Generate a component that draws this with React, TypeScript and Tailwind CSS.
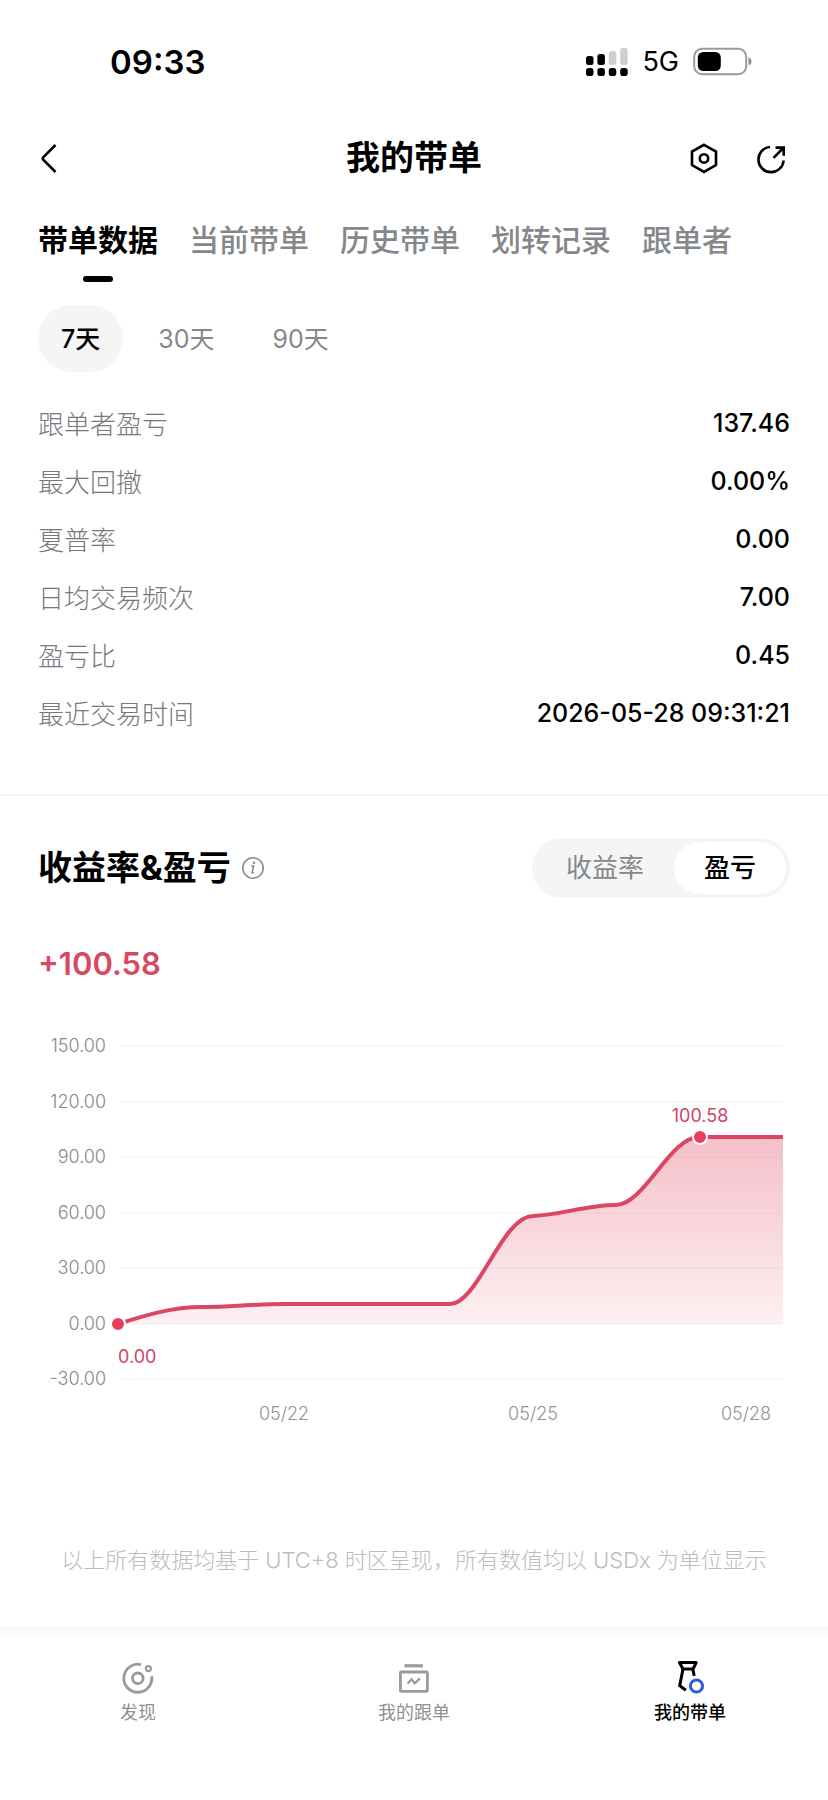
import React, { useState } from 'react';

const tabs = ['带单数据', '当前带单', '历史带单', '划转记录', '跟单者'];
const ranges = ['7天', '30天', '90天'];

const stats = [
  { label: '跟单者盈亏', value: '137.46' },
  { label: '最大回撤', value: '0.00%' },
  { label: '夏普率', value: '0.00' },
  { label: '日均交易频次', value: '7.00' },
  { label: '盈亏比', value: '0.45' },
  { label: '最近交易时间', value: '2026-05-28 09:31:21' },
];

const yTicks = [
  { label: '150.00', y: 30 },
  { label: '120.00', y: 86 },
  { label: '90.00', y: 141 },
  { label: '60.00', y: 197 },
  { label: '30.00', y: 252 },
  { label: '0.00', y: 308 },
  { label: '-30.00', y: 363 },
];

const xTicks = [
  { label: '05/22', x: 246 },
  { label: '05/25', x: 495 },
  { label: '05/28', x: 708 },
];

const linePath =
  'M80 308 C108 299 135 291 163 291 C191 291 218 288 246 288 L412 288 C440 288 464 200 495 200 C523 199 548 189 578 189 C606 189 632 121 661 121 L745 121';

function StatusBar() {
  return (
    <div className="flex h-[124px] items-center justify-between pl-[110px] pr-[76px]">
      <span className="text-[33px] leading-10 font-semibold">09:33</span>
      <div className="flex items-center gap-3.5">
        <svg className="h-[30px] w-[42px]" viewBox="0 0 42 30">
          <rect x="0" y="9" width="7.5" height="9" rx="2.5" />
          <rect x="11.4" y="7" width="7.5" height="11" rx="2.5" />
          <rect x="22.8" y="4" width="7.5" height="14" rx="2.5" fill="#cfcfcf" />
          <rect x="34.2" y="1" width="7.5" height="17" rx="2.5" fill="#cfcfcf" />
          <rect x="0" y="21" width="7.5" height="8" rx="2.8" />
          <rect x="11.4" y="21" width="7.5" height="8" rx="2.8" />
          <rect x="22.8" y="21" width="7.5" height="8" rx="2.8" />
          <rect x="34.2" y="21" width="7.5" height="8" rx="2.8" />
        </svg>
        <span className="text-[27px] leading-8">5G</span>
        <svg className="h-[30px] w-[59px]" viewBox="0 0 59 30">
          <rect x="1.2" y="1.7" width="52" height="25.5" rx="8" fill="none" stroke="#9b9b9b" strokeWidth="2" />
          <rect x="4.8" y="5" width="23" height="19" rx="5.5" />
          <path d="M55.5 10.5c2 .6 3 2.2 3 4s-1 3.4-3 4z" fill="#8a8a8a" />
        </svg>
      </div>
    </div>
  );
}

function Header() {
  return (
    <header className="grid h-[68px] grid-cols-3 items-center px-10">
      <button aria-label="返回" className="justify-self-start">
        <svg className="h-8 w-5" viewBox="0 0 20 32" fill="none" stroke="currentColor" strokeWidth="2.6">
          <path d="M15.5 3 3.2 15.3a1.6 1.6 0 0 0 0 2.3L15.5 30" />
        </svg>
      </button>
      <h1 className="text-center text-[34px] leading-10 font-bold">我的带单</h1>
      <div className="flex gap-9 justify-self-end">
        <button aria-label="设置">
          <svg className="h-8 w-8" viewBox="0 0 32 32" fill="none" stroke="currentColor" strokeWidth="2.6">
            <path d="M16 2.8 28 9.500v13.600L16 30 4 23.100V9.500z" />
            <circle cx="16" cy="16.4" r="4.2" />
          </svg>
        </button>
        <button aria-label="分享">
          <svg className="h-8 w-8" viewBox="0 0 32 32" fill="none" stroke="currentColor" strokeWidth="2.6">
            <path d="M14 5A12.600 12.600 0 1 0 27.600 18.500" />
            <path d="M17.500 15.800 27.300 6" />
            <path d="M19.500 5.600h8.200v8.200" />
          </svg>
        </button>
      </div>
    </header>
  );
}

function ProfitChart() {
  return (
    <svg className="mt-8 w-full" viewBox="0 0 752 416" role="img" aria-label="盈亏">
      <defs>
        <linearGradient id="area" x1="0" y1="0" x2="0" y2="1">
          <stop offset="0" stopColor="#e2445f" stopOpacity="0.34" />
          <stop offset="1" stopColor="#e2445f" stopOpacity="0.08" />
        </linearGradient>
      </defs>

      {yTicks.map((tick) => (
        <g key={tick.label}>
          <line x1="82" x2="745" y1={tick.y} y2={tick.y} stroke="#f9f9f9" strokeWidth="2" />
          <text x="68" y={tick.y + 6} textAnchor="end" fontSize="18" fontWeight="300" fill="#85888c">
            {tick.label}
          </text>
        </g>
      ))}
      {xTicks.map((tick) => (
        <text key={tick.label} x={tick.x} y="404" textAnchor="middle" fontSize="18" fontWeight="300" fill="#909398">
          {tick.label}
        </text>
      ))}

      <path d={`${linePath} V308 H80 Z`} fill="url(#area)" />
      <path d={linePath} fill="none" stroke="#db4762" strokeWidth="4" />

      <circle cx="80" cy="308" r="7" fill="#e83e5c" stroke="#fff" strokeWidth="2" />
      <text x="80" y="347" fontSize="18" fill="#d04461">0.00</text>
      <circle cx="662" cy="121" r="7" fill="#e83e5c" stroke="#fff" strokeWidth="2" />
      <text x="662" y="106" textAnchor="middle" fontSize="18" fill="#d04461">100.58</text>
    </svg>
  );
}

function BottomNav() {
  return (
    <nav className="grid grid-cols-3 border-t-10 border-[#fafafa] pt-[26px] pb-[74px] text-[18px] leading-6 text-[#8f9092]">
      <a href="#discover" className="flex flex-col items-center gap-[7px]">
        <svg className="size-8" viewBox="0 0 32 32" fill="none" stroke="#9a9a9a" strokeWidth="2.8">
          <path d="M19 2.6A14 14 0 1 0 29.7 14.3" />
          <circle cx="15.8" cy="16.3" r="5.3" />
          <circle cx="26.4" cy="6.6" r="2.6" strokeWidth="2" />
        </svg>
        发现
      </a>
      <a href="#following" className="flex flex-col items-center gap-[7px]">
        <svg className="size-8" viewBox="0 0 32 32" fill="none" stroke="#9a9a9a" strokeWidth="2.8">
          <path d="M6.5 3.8h18.5" strokeWidth="3.2" />
          <rect x="2.4" y="10" width="27" height="19.4" rx="1" />
          <path d="m9.5 21.5 4-4 3.3 3.8 5-5" strokeWidth="2.4" />
        </svg>
        我的跟单
      </a>
      <a href="#leading" aria-current="page" className="flex flex-col items-center gap-[7px] font-medium text-black">
        <svg className="size-8 overflow-visible" viewBox="0 0 32 32" fill="none" stroke="currentColor" strokeWidth="3">
          <path d="M5.400 .6h16.800l-3.200 6.400H9z" strokeLinejoin="round" />
          <path d="M9 7 5.700 23.600l6.200 4.600M18.700 7l1.600 6.800" />
          <circle cx="22.5" cy="24" r="6.100" stroke="#3059e2" />
        </svg>
        我的带单
      </a>
    </nav>
  );
}

export default function App() {
  const [tab, setTab] = useState('带单数据');
  const [range, setRange] = useState('7天');
  const [metric, setMetric] = useState('盈亏');

  return (
    <div className="min-h-screen bg-white font-['Inter','Noto_Sans_CJK_SC',sans-serif] text-black">
      <StatusBar />
      <Header />

      <main>
        <nav className="flex gap-[31px] px-[38px] pt-7">
          {tabs.map((item) => (
            <button
              key={item}
              onClick={() => setTab(item)}
              className={`flex flex-col items-center gap-4 text-[30px] leading-10 whitespace-nowrap ${
                tab === item ? 'font-bold text-black' : 'font-medium text-[#86878a]'
              }`}
            >
              {item}
              {tab === item && <span className="h-1.5 w-[30px] rounded-full bg-black" />}
            </button>
          ))}
        </nav>

        <div className="mt-[23px] flex gap-3 px-[38px]">
          {ranges.map((item) => (
            <button
              key={item}
              onClick={() => setRange(item)}
              className={`h-[67px] rounded-full px-[23px] text-[25px] leading-8 ${
                range === item ? 'bg-[#f5f5f5] font-medium text-black' : 'text-[#86878a]'
              }`}
            >
              {item}
            </button>
          ))}
        </div>

        <dl className="mt-[23px] px-[38px]">
          {stats.map((row) => (
            <div key={row.label} className="flex h-[58px] items-center justify-between">
              <dt className="text-[26px] font-light text-[#77787b]">{row.label}</dt>
              <dd className="text-[25px] font-medium">{row.value}</dd>
            </div>
          ))}
        </dl>

        <section className="mt-[51px] border-t-2 border-[#f5f5f5] px-[38px] pt-[42px]">
          <div className="flex items-center justify-between">
            <div className="flex items-center gap-2.5">
              <h2 className="text-[34px] leading-10 font-bold">收益率&amp;盈亏</h2>
              <button aria-label="说明">
                <svg className="size-6" viewBox="0 0 24 24" fill="none" stroke="#8c8c8c" strokeWidth="1.6">
                  <circle cx="12" cy="12" r="10.2" />
                  <path d="M10.3 10h2.3l-1.5 6.800h1.800" />
                  <circle cx="13" cy="6.9" r="0.5" />
                </svg>
              </button>
            </div>
            <div className="flex h-[60px] items-center rounded-full bg-[#f5f5f5] p-1 text-[26px] leading-8">
              {['收益率', '盈亏'].map((item) => (
                <button
                  key={item}
                  onClick={() => setMetric(item)}
                  className={`h-full rounded-full px-[30px] ${
                    metric === item ? 'bg-white font-medium text-black' : 'text-[#86878a]'
                  }`}
                >
                  {item}
                </button>
              ))}
            </div>
          </div>

          <p className="mt-[46px] text-[31px] leading-10 font-semibold text-[#d94861]">+100.58</p>
          <ProfitChart />
        </section>

        <p className="mt-28 mb-[50px] px-[38px] text-center text-[22px] leading-8 font-light text-[#bcbcbe]">
          以上所有数据均基于 UTC+8 时区呈现，所有数值均以 USDx 为单位显示
        </p>
      </main>

      <BottomNav />
    </div>
  );
}
